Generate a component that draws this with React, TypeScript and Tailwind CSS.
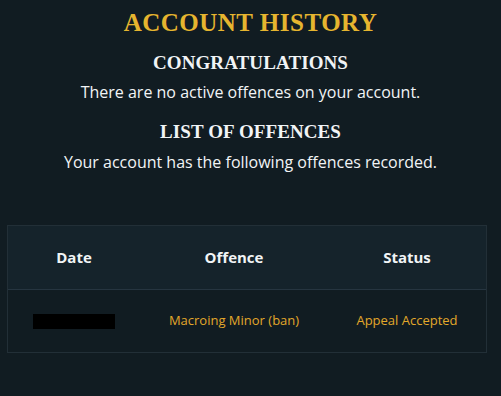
const serif = "font-['Liberation_Serif','DejaVu_Serif',serif]";

export default function App() {
  return (
    <div className="h-[396px] w-[501px] overflow-hidden bg-[#111c22] font-['Open_Sans','Liberation_Sans',sans-serif] text-[#f1f4f6]">
      <div className="flex flex-col items-center pt-[8px] text-center">
        <h1 className={`${serif} text-[25px] font-bold leading-[30px] tracking-[0.5px] text-[#e6b52f]`}>
          ACCOUNT HISTORY
        </h1>
        <h2 className={`${serif} mt-[14px] text-[19px] font-bold leading-[22px] tracking-[0.1px]`}>
          CONGRATULATIONS
        </h2>
        <p className="mt-[8px] text-[16px] leading-[20px]">
          There are no active offences on your account.
        </p>
        <h2 className={`${serif} mt-[19px] text-[19px] font-bold leading-[22px] tracking-[0.1px]`}>
          LIST OF OFFENCES
        </h2>
        <p className="mt-[9px] text-[16px] leading-[20px]">
          Your account has the following offences recorded.
        </p>
      </div>

      <div className="mx-[7px] mt-[53px] w-[480px] border border-[#222f37]">
        <div className="grid h-[63px] grid-cols-[132px_188px_158px] items-center bg-[#15232b] text-center text-[15px] font-bold">
          <div>Date</div>
          <div>Offence</div>
          <div>Status</div>
        </div>
        <div className="grid h-[63px] grid-cols-[132px_188px_158px] items-center border-t border-[#263540] text-center text-[13px] text-[#e3a82a]">
          <div className="flex justify-center">
            <div className="h-[15px] w-[82px] bg-black" />
          </div>
          <div>Macroing Minor (ban)</div>
          <div>Appeal Accepted</div>
        </div>
      </div>
    </div>
  );
}
